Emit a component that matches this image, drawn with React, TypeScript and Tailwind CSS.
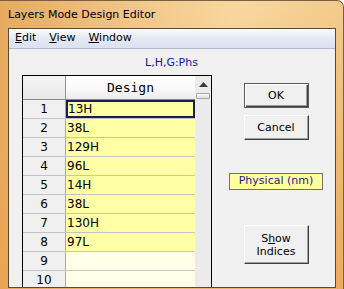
import type { ReactNode } from "react";

const rows = ["13H", "38L", "129H", "96L", "14H", "38L", "130H", "97L", "", ""];

function Btn({ children, primary, tall }: { children: ReactNode; primary?: boolean; tall?: boolean }) {
  const frame = primary
    ? "border border-[#5a5a5a] shadow-[inset_1px_1px_0_#ffffff,inset_-1px_-1px_0_#404040,inset_-2px_-2px_0_#a0a0a0]"
    : "border border-t-white border-l-white border-r-[#404040] border-b-[#404040] shadow-[inset_-1px_-1px_0_#a0a0a0]";
  return (
    <div
      className={`w-[65px] ${tall ? "h-[39px]" : "h-[25px]"} ${frame} bg-[#f0f0f0] flex flex-col items-center justify-center text-[11px] leading-[13px] text-black`}
    >
      {children}
    </div>
  );
}

export default function App() {
  return (
    <div className="w-[344px] h-[289px] overflow-hidden rounded-tr-[7px] border-r border-t border-[#7a6040] bg-[linear-gradient(180deg,rgba(255,255,255,0)_0%,rgba(232,150,60,0.55)_100%),linear-gradient(100deg,#e7aa60_0%,#f2c88a_35%,#f8d8a0_60%,#efc585_100%)] font-['DejaVu_Sans',sans-serif]">
      {/* title */}
      <div className="h-[27px] pl-[8px] pt-[6px] text-[11px] leading-[16px] text-black">Layers Mode Design Editor</div>

      {/* client */}
      <div className="ml-[8px] w-[328px] h-[260px] border border-[#5b4a33] bg-[#f0f0f0] overflow-hidden flex flex-col">
        <div className="h-[20px] shrink-0 border-b border-[#b4bccc] bg-[linear-gradient(180deg,#fbfcfe_0%,#e4e9f4_50%,#dae1f0_100%)] flex items-center gap-[13px] pl-[6px] text-[11px] text-black">
          <span><u>E</u>dit</span>
          <span><u>V</u>iew</span>
          <span><u>W</u>indow</span>
        </div>

        <div className="flex">
          {/* grid area */}
          <div className="flex flex-col">
            <div className="mt-[7px] ml-[136px] text-[11px] leading-[13px] text-[#1414a0]">L,H,G:Phs</div>
            <div className="mt-[6px] ml-[13px] w-[190px] border border-black flex">
              <div className="flex flex-col w-[172px]">
                <div className="flex h-[24px] border-b border-[#888]">
                  <div className="w-[43px] border-r border-[#909090] bg-[linear-gradient(180deg,#f4f4f4,#e8e8e8)]" />
                  <div className="flex-1 bg-[linear-gradient(180deg,#ffffff_0%,#fafafa_50%,#ececec_100%)] flex items-center justify-center font-['DejaVu_Sans_Mono',monospace] text-[13px] text-black">
                    Design
                  </div>
                </div>
                {rows.map((v, i) => (
                  <div key={i} className="flex h-[19px] border-b border-[#c4c4c4]">
                    <div className="w-[43px] border-r border-[#a8a8a8] bg-[#f0f0f0] flex items-center justify-center text-[12px] text-black">
                      {i + 1}
                    </div>
                    <div
                      className={`flex-1 flex items-center pl-[1px] text-[12px] text-black ${i < 8 ? "bg-[#ffffa6]" : "bg-[#ffffe8]"} ${i === 0 ? "shadow-[inset_0_0_0_2px_#1c1c54] pl-[2px]" : ""}`}
                    >
                      {v}
                    </div>
                  </div>
                ))}
              </div>
              {/* scrollbar */}
              <div className="w-[16px] bg-[#ebebeb] flex flex-col items-center">
                <svg width="9" height="5" viewBox="0 0 9 5" className="mt-[6px]">
                  <path d="M4.5 0 L9 5 L0 5 Z" fill="#3c3c3c" />
                </svg>
                <div className="mt-[6px] w-[14px] h-[6px] border border-[#a8a8a8] rounded-[1px] bg-[linear-gradient(180deg,#fafafa,#dcdcdc)]" />
              </div>
            </div>
          </div>

          {/* buttons */}
          <div className="ml-[17px] w-[94px] flex flex-col items-center">
            <div className="mt-[34px]">
              <Btn primary>OK</Btn>
            </div>
            <div className="mt-[7px]">
              <Btn>Cancel</Btn>
            </div>
            <div className="mt-[33px] w-[94px] h-[17px] border border-[#707070] bg-[#ffffa0] flex items-center justify-center text-[11px] text-[#1e1e78]">
              Physical (nm)
            </div>
            <div className="mt-[35px]">
              <Btn tall>
                <span>S<u>h</u>ow</span>
                <span>Indices</span>
              </Btn>
            </div>
          </div>
        </div>
      </div>
    </div>
  );
}
